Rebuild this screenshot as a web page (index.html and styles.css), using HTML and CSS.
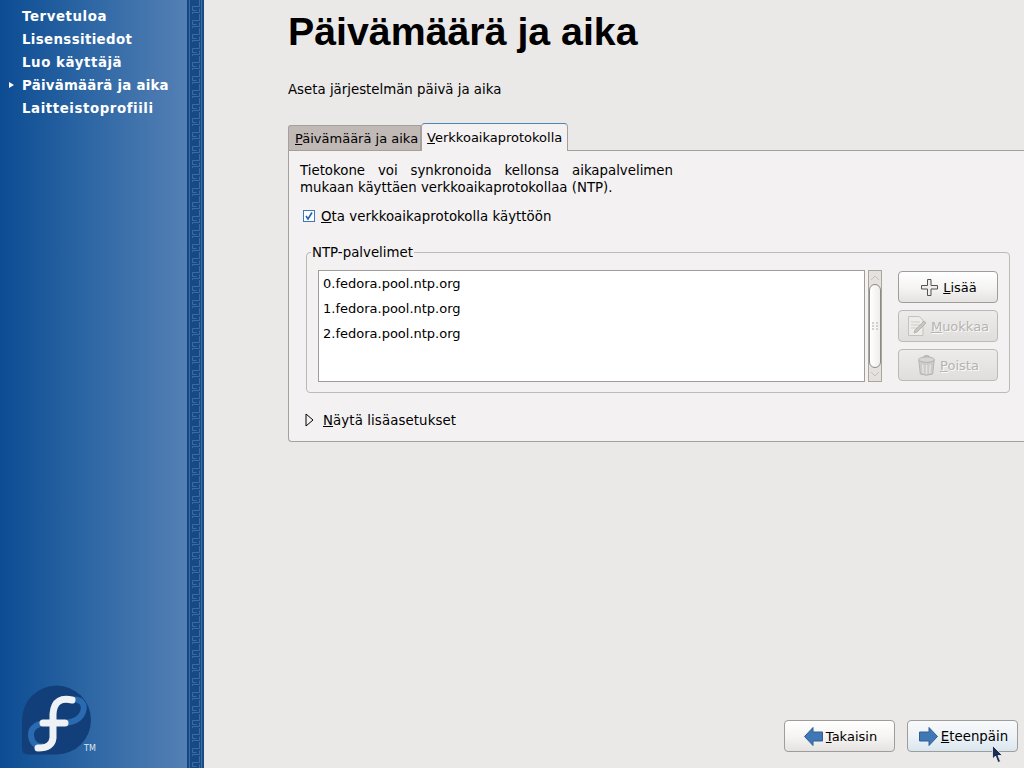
FILE: index.html
```html
<!DOCTYPE html>
<html lang="fi">
<head>
<meta charset="utf-8">
<title>Päivämäärä ja aika</title>
<link rel="stylesheet" href="styles.css">
</head>
<body>
<div class="screen">
  <aside class="sidebar">
    <nav class="steps">
      <div class="step">Tervetuloa</div>
      <div class="step lic">Lisenssitiedot</div>
      <div class="step">Luo käyttäjä</div>
      <div class="step current">Päivämäärä ja aika</div>
      <div class="step">Laitteistoprofiili</div>
    </nav>
    <div class="logo">
      <svg class="mark" width="80" height="80" viewBox="0 0 80 80">
        <path d="M6 42 A34.500 34.500 0 1 1 40.500 76.500 L12 76.500 Q6 76.500 6 70 Z" fill="#123f79"/>
        <path d="M37 45 C22 43 14 50 15 58 C16 66 22 70 28 68" fill="none" stroke="#2a6ab0" stroke-width="6"/>
        <path d="M56 22 C64 20 70 26 67 34 C64 42 55 45 45 45" fill="none" stroke="#2a6ab0" stroke-width="6"/>
        <path d="M56 22 C46 20 38 22 37 36 L37 60 C36 68 30 70 22 70" fill="none" stroke="#eef2f7" stroke-width="7" stroke-linecap="round"/>
        <path d="M27 45 L49 45" fill="none" stroke="#eef2f7" stroke-width="7" stroke-linecap="round"/>
      </svg>
      <span class="tm">TM</span>
    </div>
  </aside>
  <div class="greek">
    <svg width="17" height="768">
      <defs>
        <pattern id="key" width="17" height="14" patternUnits="userSpaceOnUse">
          <rect width="17" height="14" fill="#174a84"/>
          <path d="M2.500 0 V14 M12.500 0 V6.500 H5.500 V10.500 H9.500 M5.500 14 V12.500 H12.500 V8.500" fill="none" stroke="#3a6ca3" stroke-width="1"/>
          <rect x="0" width="1" height="14" fill="#174579"/>
          <rect x="14" width="1" height="14" fill="#3f72aa"/>
          <rect x="15" width="2" height="14" fill="#1c4a80"/>
        </pattern>
      </defs>
      <rect width="17" height="768" fill="url(#key)"/>
    </svg>
  </div>
  <main class="content">
    <h1 class="title">Päivämäärä ja aika</h1>
    <p class="lead">Aseta järjestelmän päivä ja aika</p>
    <div class="tabs">
      <div class="tab"><u>P</u>äivämäärä ja aika</div>
      <div class="tab active"><u>V</u>erkkoaikaprotokolla</div>
    </div>
    <section class="panel">
      <p class="desc"><span class="just">Tietokone voi synkronoida kellonsa aikapalvelimen</span>mukaan käyttäen verkkoaikaprotokollaa (NTP).</p>
      <label class="check">
        <svg class="box" width="12" height="12" viewBox="0 0 12 12"><rect x="0.500" y="0.500" width="11" height="11" fill="#fff" stroke="#3f7ab5"/><path d="M3 6 L5 9 L9 2.500" fill="none" stroke="#1f66b0" stroke-width="1.600"/></svg>
        <span><u>O</u>ta verkkoaikaprotokolla käyttöön</span>
      </label>
      <fieldset class="group">
        <legend><span>NTP-palvelimet</span></legend>
        <div class="group-body">
          <div class="list">
            <div class="row">0.fedora.pool.ntp.org</div>
            <div class="row">1.fedora.pool.ntp.org</div>
            <div class="row">2.fedora.pool.ntp.org</div>
          </div>
          <div class="scrollbar">
            <svg class="arrow" width="12" height="13" viewBox="0 0 12 13"><path d="M2 9 L6 5 L10 9" fill="none" stroke="#c4c0bc"/></svg>
            <div class="thumb"><i></i><i></i><i></i><i></i><i></i><i></i></div>
            <svg class="arrow" width="12" height="13" viewBox="0 0 12 13"><path d="M2 4 L6 8 L10 4" fill="none" stroke="#c4c0bc"/></svg>
          </div>
          <div class="actions">
            <button class="btn side add">
              <svg width="17" height="17" viewBox="0 0 17 17"><path d="M6.500 0.500 H10 V6.500 H16.500 V10 H10 V16.500 H6.500 V10 H0.500 V6.500 H6.500 Z" fill="#f0eeec" stroke="#55534f"/></svg>
              <span><u>L</u>isää</span>
            </button>
            <button class="btn side off edit">
              <svg width="20" height="20" viewBox="0 0 20 20"><path d="M0.500 0.500 H11 L15 4 V19.500 H0.500 Z" fill="#eeecea" stroke="#c4c1be"/><path d="M3 6 H12 M3 9 H12 M3 12 H9" stroke="#cfccc9"/><path d="M6 17 L7 14 L16 5 L18 7 L9 16 Z" fill="#c9c6c2" stroke="#aaa7a3" stroke-width="0.700"/></svg>
              <span><u>M</u>uokkaa</span>
            </button>
            <button class="btn side off trash">
              <svg width="19" height="21" viewBox="0 0 20 22"><ellipse cx="10" cy="5" rx="8.500" ry="3" fill="#d8d6d3" stroke="#b5b2af"/><path d="M7 2 Q10 -0.500 13 2" fill="none" stroke="#b5b2af" stroke-width="1.500"/><path d="M2 6 L3.500 20 Q10 22.500 16.500 20 L18 6 Q10 9.500 2 6 Z" fill="#cdcbc8" stroke="#b5b2af"/><path d="M6 10 L6.500 19 M10 10.500 V20 M14 10 L13.500 19" stroke="#e6e4e2" stroke-width="1.500"/></svg>
              <span><u>P</u>oista</span>
            </button>
          </div>
        </div>
      </fieldset>
      <div class="expander">
        <svg width="9" height="14" viewBox="0 0 9 14"><path d="M1 1 L8 7 L1 13 Z" fill="#f3f1f1" stroke="#000"/></svg>
        <span><u>N</u>äytä lisäasetukset</span>
      </div>
    </section>
    <footer class="footer">
      <button class="btn nav">
        <svg width="19" height="19" viewBox="0 0 19 19"><path d="M9 0.500 L0.500 9.500 L9 18.500 V14 H18.500 V5 H9 Z" fill="#3f78b5" stroke="#2f5f95"/></svg>
        <span><u>T</u>akaisin</span>
      </button>
      <button class="btn nav hover">
        <svg width="19" height="19" viewBox="0 0 19 19"><path d="M10 0.500 L18.500 9.500 L10 18.500 V14 H0.500 V5 H10 Z" fill="#3f78b5" stroke="#2f5f95"/></svg>
        <span><u>E</u>teenpäin</span>
      </button>
    </footer>
    <svg class="cursor" width="12" height="19" viewBox="0 0 12 19"><path d="M0.500 0.500 L0.500 14 L3.500 11 L6 17.500 L8.500 16.500 L6 10.500 L10.500 10.500 Z" fill="#1c2b50" stroke="#f4f4f4" stroke-width="0.800"/></svg>
  </main>
</div>
</body>
</html>
```
FILE: styles.css
```css
* { box-sizing: border-box; }
html, body { margin: 0; height: 100%; overflow: hidden; }
body { font-family: "DejaVu Sans", sans-serif; font-size: 13.33px; color: #000; background: #eae9e7; }
.screen { display: flex; width: 1024px; height: 768px; }
.sidebar { width: 187px; flex: none; display: flex; flex-direction: column; justify-content: space-between; background: linear-gradient(90deg, #0c4c93 0%, #2f68a5 50%, #5480b4 100%); }
.steps { padding-top: 5px; }
.step { height: 23px; line-height: 23px; padding-left: 22px; color: #fff; font-weight: bold; letter-spacing: 0.58px; white-space: nowrap; position: relative; }
.lic { letter-spacing: 0.37px; }
.current { letter-spacing: 0.25px; }
.current::before { content: ""; position: absolute; left: 9px; top: 8px; border-left: 5px solid #fff; border-top: 3.500px solid transparent; border-bottom: 3.500px solid transparent; }
.logo { position: relative; height: 90px; padding-left: 16px; }
.mark { display: block; filter: blur(0.4px); }
.tm { position: absolute; left: 84px; top: 66px; font-size: 8px; color: #dfe7f1; }
.greek { width: 17px; flex: none; height: 768px; overflow: hidden; }
.greek svg { display: block; }
.content { flex: 1; position: relative; display: flex; flex-direction: column; padding-left: 84px; min-width: 0; }
.title { margin: 9px 0 0; height: 44px; font-family: "Liberation Sans", sans-serif; font-size: 39.3px; line-height: 44px; font-weight: bold; }
.lead { margin: 27px 0 0; height: 20px; line-height: 20px; }
.tabs { display: flex; margin-top: 22px; align-items: flex-end; height: 28px; position: relative; z-index: 1; font-size: 13px; }
.tab { height: 25px; line-height: 25px; padding: 0 2px 0 6px; background: #c0b9b5; border: 1px solid #a5a09c; border-bottom: 0; border-radius: 3px 0 0 0; }
.active { height: 28px; line-height: 27px; margin-bottom: -1px; padding: 0 5px; background: #f3f1f2; border-color: #a5a09c; border-top: 1px solid #4f86b8; border-radius: 4px 4px 0 0; }
.panel { height: 292px; width: 736px; padding: 11px 11px 0; background: #f3f1f2; border: 1px solid #a5a09c; border-right: 0; border-radius: 0 0 0 4px; }
.desc { margin: 0; line-height: 17px; width: 373px; }
.just { display: block; text-align: justify; text-align-last: justify; }
.check { display: flex; align-items: center; gap: 6px; margin: 10px 0 0 3px; height: 20px; letter-spacing: 0.03px; }
.group { position: relative; margin: 18px 3px 0 6px; padding: 0 11px; width: 704px; height: 149px; border: 1px solid #bdb9b5; border-radius: 4px; }
.group legend { padding: 0 1px; margin-left: -7px; line-height: 17px; }
.group-body { display: flex; margin-top: 9px; }
.list { width: 547px; height: 112px; background: #fff; border: 1px solid #a09c98; font-size: 13px; }
.row { height: 25px; line-height: 25px; padding-left: 4px; }
.scrollbar { width: 14px; height: 112px; margin-left: 3px; background: #e4e1df; border: 1px solid #a9a5a1; display: flex; flex-direction: column; align-items: center; justify-content: space-between; }
.arrow { flex: none; }
.thumb { width: 12px; flex: 1; background: linear-gradient(90deg, #fff, #efedec); border: 1px solid #8e8a86; border-radius: 6px; display: grid; grid-template-columns: 2px 2px; gap: 1px 2px; align-content: center; justify-content: center; }
.thumb i { width: 2px; height: 2px; background: #d3d0cd; }
.actions { display: flex; flex-direction: column; gap: 7px; margin: 1px 0 0 16px; }
.btn { display: flex; align-items: center; justify-content: center; gap: 3px; font: inherit; font-size: 13px; color: #000; padding: 0; border: 1px solid #a09c98; border-radius: 4px; background: linear-gradient(180deg, #fff 0%, #f6f5f4 50%, #e5e3e1 100%); }
.side { width: 100px; height: 32px; }
.add { gap: 5px; padding-left: 2px; }
.edit { gap: 3px; padding-left: 1px; }
.trash { gap: 4px; }
.off { color: #b5b2af; background: linear-gradient(180deg, #eeecea, #e0dedc); border-color: #bdb9b5; text-shadow: 1px 1px 0 #fbfafa; }
.expander { display: flex; align-items: center; gap: 9px; margin: 17px 0 0 5px; height: 20px; letter-spacing: 0.1px; }
.footer { position: absolute; left: 580px; top: 720px; display: flex; gap: 12px; }
.nav { width: 111px; height: 32px; padding-left: 2px; }
.hover { background: linear-gradient(180deg, #f8fafc 0%, #eef3f7 50%, #d9e6ef 100%); font-size: 13.33px; }
.cursor { position: absolute; left: 788px; top: 745px; }
```
